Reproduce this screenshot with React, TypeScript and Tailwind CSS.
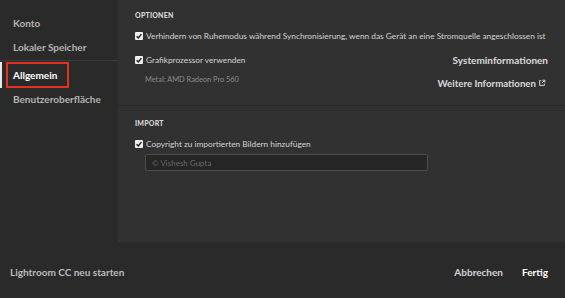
import React from 'react';

const Check: React.FC = () => (
  <span className="flex h-[8px] w-[8px] shrink-0 items-center justify-center rounded-[1px] bg-[#f0f0f0]">
    <svg viewBox="0 0 10 10" className="h-[8px] w-[8px]">
      <path d="M2 5.2 L4.2 7.4 L8 2.6" fill="none" stroke="#1e1e1e" strokeWidth="1.8" />
    </svg>
  </span>
);

const App: React.FC = () => {
  return (
    <div className="flex h-[298px] w-[565px] flex-col bg-[#2a2a2a] font-['Lato',sans-serif] text-[#d0d0d0]">
      <div className="flex h-[242px]">
        {/* sidebar */}
        <nav className="flex w-[118px] flex-col pt-[16px] text-[10px] font-bold leading-[14px] text-[#b4b4b4]">
          <div className="h-[14px] px-[13px]">Konto</div>
          <div className="mt-[10px] h-[14px] px-[13px]">Lokaler Speicher</div>
          <div className="relative mt-[6px] h-[30px] border-t border-[#3a3a3a] pt-[1px]">
            <span className="absolute left-0 top-[1px] h-[26px] w-[2px] bg-[#e8e8e8]" />
            <div className="ml-[6px] flex h-[26px] w-[63px] items-center border-2 border-[#e0321e] px-[5px] text-white">
              Allgemein
            </div>
          </div>
          <div className="mt-[2px] h-[14px] px-[13px]">Benutzeroberfläche</div>
        </nav>

        {/* main panel */}
        <main className="flex flex-1 flex-col bg-[#313131]">
          <section className="h-[106px] border-b border-[#272727] px-[17px] pt-[10px]">
            <h2 className="h-[10px] text-[7px] font-black leading-[10px] tracking-[0.2px] text-[#d8d8d8]">OPTIONEN</h2>
            <div className="mt-[10px] flex h-[12px] items-center gap-[3px] whitespace-nowrap text-[8.3px] text-[#d4d4d4]">
              <Check />
              <span>Verhindern von Ruhemodus während Synchronisierung, wenn das Gerät an eine Stromquelle angeschlossen ist</span>
            </div>
            <div className="mt-[12px] flex h-[12px] items-center justify-between">
              <div className="flex items-center gap-[3px] text-[8.3px] text-[#d4d4d4]">
                <Check />
                <span>Grafikprozessor verwenden</span>
              </div>
              <span className="text-[10px] font-bold text-[#dadada]">Systeminformationen</span>
            </div>
            <div className="mt-[8px] flex h-[16px] items-start justify-between">
              <span className="mt-[1px] pl-[10px] text-[7.4px] leading-[10px] text-[#8c8c8c]">Metal: AMD Radeon Pro 560</span>
              <span className="mr-[2px] mt-[3px] flex items-center gap-[2px] text-[9.7px] font-bold leading-[12px] text-[#dadada]">
                Weitere Informationen
                <svg viewBox="0 0 10 10" className="h-[8px] w-[8px]">
                  <path d="M4 2 H2 V8 H8 V6" fill="none" stroke="#dadada" strokeWidth="1.2" />
                  <path d="M5.5 1.5 H8.5 V4.5 M8.5 1.5 L4.8 5.2" fill="none" stroke="#dadada" strokeWidth="1.2" />
                </svg>
              </span>
            </div>
          </section>

          <section className="px-[17px] pt-[12px]">
            <h2 className="h-[10px] text-[7px] font-black leading-[10px] tracking-[0.2px] text-[#d8d8d8]">IMPORT</h2>
            <div className="mt-[10px] flex h-[12px] items-center gap-[3px] text-[8.3px] text-[#d4d4d4]">
              <Check />
              <span>Copyright zu importierten Bildern hinzufügen</span>
            </div>
            <div className="ml-[10px] mt-[4px] flex h-[17px] w-[283px] items-center rounded-[2px] border border-[#4c4c4c] bg-[#262626] px-[6px] text-[8px] text-[#6a6a6a]">
              <span className="blur-[0.6px]">© Vishesh Gupta</span>
            </div>
          </section>
        </main>
      </div>

      {/* footer */}
      <footer className="flex flex-1 items-center justify-between pl-[10px] pr-[17px] pt-[4px] text-[10px] font-bold">
        <span className="text-[#bdbdbd]">Lightroom CC neu starten</span>
        <div className="flex items-center gap-[19px]">
          <span className="text-[#d4d4d4]">Abbrechen</span>
          <span className="text-white">Fertig</span>
        </div>
      </footer>
    </div>
  );
};

export default App;
